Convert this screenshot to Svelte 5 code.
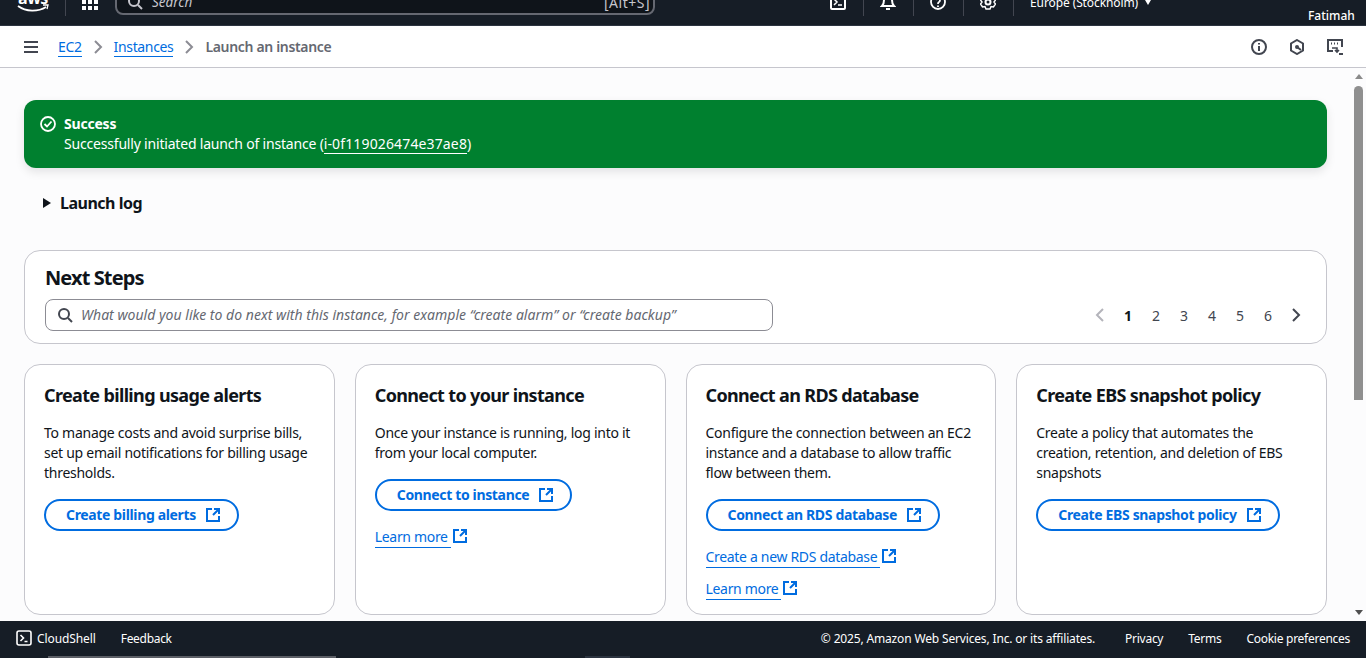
<script>
  const pages = [1, 2, 3, 4, 5, 6];
  const cards = [
    {
      title: 'Create billing usage alerts',
      body: 'To manage costs and avoid surprise bills, set up email notifications for billing usage thresholds.',
      action: 'Create billing alerts',
      links: []
    },
    {
      title: 'Connect to your instance',
      body: 'Once your instance is running, log into it from your local computer.',
      action: 'Connect to instance',
      links: ['Learn more']
    },
    {
      title: 'Connect an RDS database',
      body: 'Configure the connection between an EC2 instance and a database to allow traffic flow between them.',
      action: 'Connect an RDS database',
      links: ['Create a new RDS database', 'Learn more']
    },
    {
      title: 'Create EBS snapshot policy',
      body: 'Create a policy that automates the creation, retention, and deletion of EBS snapshots',
      action: 'Create EBS snapshot policy',
      links: []
    }
  ];
</script>

{#snippet external()}
  <svg class="ext" viewBox="0 0 16 16" width="16" height="16" fill="none" stroke="currentColor" stroke-width="2">
    <path d="M7 2H2v12h12V9" />
    <path d="M9 2h5v5M14 2L8 8" />
  </svg>
{/snippet}

<div class="page">
  <header class="topbar">
    <div class="top-row">
      <div class="aws">
        <span class="aws-word">aws</span>
        <svg viewBox="0 0 34 10" width="34" height="10" fill="none" stroke="#fff">
          <path d="M2 2c8 6 20 6 28 1" stroke-width="1.8" />
          <path d="M27 1l5 0-1 4" stroke-width="1.3" />
        </svg>
      </div>
      <span class="sep first"></span>
      <svg class="apps" viewBox="0 0 16 16" width="16" height="16" fill="#fff">
        <rect x="0" y="0" width="4" height="4" /><rect x="6" y="0" width="4" height="4" /><rect x="12" y="0" width="4" height="4" />
        <rect x="0" y="6" width="4" height="4" /><rect x="6" y="6" width="4" height="4" /><rect x="12" y="6" width="4" height="4" />
        <rect x="0" y="12" width="4" height="4" /><rect x="6" y="12" width="4" height="4" /><rect x="12" y="12" width="4" height="4" />
      </svg>
      <div class="global-search">
        <svg viewBox="0 0 16 16" width="16" height="16" fill="none" stroke="#c6c6cd" stroke-width="2">
          <circle cx="7" cy="7" r="5" /><path d="M11 11l4 4" />
        </svg>
        <span class="gs-text">Search</span>
        <span class="gs-key">[Alt+S]</span>
      </div>
      <div class="top-right">
        <svg viewBox="0 0 16 16" width="16" height="16" fill="none" stroke="#fff" stroke-width="2"><rect x="1" y="1" width="14" height="14" rx="1" /><path d="M4 5l3 3-3 3M8 11h4" stroke-width="1.5" /></svg>
        <span class="sep"></span>
        <svg viewBox="0 0 16 16" width="16" height="16" fill="none" stroke="#fff" stroke-width="2"><path d="M2 12c2-2 2-3 2-6a4 4 0 018 0c0 3 0 4 2 6zM6 15h4" /></svg>
        <span class="sep"></span>
        <svg viewBox="0 0 16 16" width="16" height="16" fill="none" stroke="#fff" stroke-width="1.8"><circle cx="8" cy="8" r="7" /><path d="M6 6a2 2 0 113 2c-1 .5-1 1-1 2M8 11.5v1.5" /></svg>
        <span class="sep"></span>
        <svg viewBox="0 0 16 16" width="16" height="16" fill="none" stroke="#fff" stroke-width="2"><circle cx="8" cy="8" r="2.5" /><path d="M6 1h4l1 2.500 2.500-.5 2 3L14 8l1.500 2-2 3-2.500-.5-1 2.500H6l-1-2.500-2.500.5-2-3L2 8 .5 6l2-3 2.500.5z" stroke-width="1.500" /></svg>
        <span class="sep"></span>
        <span class="region">Europe (Stockholm)</span>
        <span class="caret"></span>
        <span class="user">Fatimah</span>
      </div>
    </div>
  </header>

  <nav class="crumbs">
    <svg class="menu" viewBox="0 0 16 16" width="16" height="16" fill="none" stroke="#424650" stroke-width="2">
      <path d="M1 3h14M1 8h14M1 13h14" />
    </svg>
    <span class="crumb">EC2</span>
    <svg class="chev" viewBox="0 0 16 16" width="16" height="16" fill="none" stroke="#8c8c94" stroke-width="2"><path d="M5 2l6 6-6 6" /></svg>
    <span class="crumb">Instances</span>
    <svg class="chev" viewBox="0 0 16 16" width="16" height="16" fill="none" stroke="#8c8c94" stroke-width="2"><path d="M5 2l6 6-6 6" /></svg>
    <span class="crumb-current">Launch an instance</span>
    <div class="tools">
      <svg viewBox="0 0 16 16" width="16" height="16" fill="none" stroke="#424650" stroke-width="2"><circle cx="8" cy="8" r="7" /><path d="M8 7v5M8 4v1.500" /></svg>
      <svg viewBox="0 0 16 16" width="16" height="16" fill="none" stroke="#424650" stroke-width="2"><path d="M8 1l6 3.500v7L8 15l-6-3.500v-7z" /><circle cx="8" cy="8" r="2" fill="#424650" stroke="none" /><path d="M8 8l4 3" /></svg>
      <svg viewBox="0 0 16 16" width="16" height="16" fill="none" stroke="#424650" stroke-width="2"><path d="M6 12H1V1h14v7" /><path d="M4 4.500h1M7 4.500h1M10 4.500h1" stroke-width="2" /><path d="M5 9h5v4M8 11l2 2 2-2" stroke-width="1.600" /><path d="M12 15h4" /></svg>
    </div>
  </nav>

  <main class="content">
    <div class="flash">
      <svg class="flash-icon" viewBox="0 0 16 16" width="16" height="16" fill="none" stroke="#fff" stroke-width="1.800">
        <circle cx="8" cy="8" r="7" /><path d="M4.500 8l2.500 2.500 4.500-5" />
      </svg>
      <div>
        <div class="flash-title">Success</div>
        <div class="flash-text">Successfully initiated launch of instance (<span class="flash-link">i-0f119026474e37ae8</span>)</div>
      </div>
    </div>

    <div class="log">
      <span class="tri"></span>
      <span>Launch log</span>
    </div>

    <section class="next">
      <h2>Next Steps</h2>
      <div class="next-row">
        <div class="search">
          <svg viewBox="0 0 16 16" width="16" height="16" fill="none" stroke="#424650" stroke-width="2">
            <circle cx="7" cy="7" r="5" /><path d="M11 11l4 4" />
          </svg>
          <span>What would you like to do next with this instance, for example “create alarm” or “create backup”</span>
        </div>
        <div class="pager">
          <svg viewBox="0 0 16 16" width="16" height="16" fill="none" stroke="#b4b4bb" stroke-width="2"><path d="M11 2L5 8l6 6" /></svg>
          {#each pages as p}
            <span class="pg" class:on={p === 1}>{p}</span>
          {/each}
          <svg viewBox="0 0 16 16" width="16" height="16" fill="none" stroke="#424650" stroke-width="2"><path d="M5 2l6 6-6 6" /></svg>
        </div>
      </div>
    </section>

    <div class="cards">
      {#each cards as card}
        <article class="card">
          <h3>{card.title}</h3>
          <p>{card.body}</p>
          <div class="action-wrap">
            <span class="action">{card.action}{@render external()}</span>
          </div>
          {#each card.links as link}
            <div class="link-row"><span class="link">{link}</span>{@render external()}</div>
          {/each}
        </article>
      {/each}
    </div>

    <div class="scrollbar">
      <span class="sb-up"></span>
      <span class="sb-thumb"></span>
      <span class="sb-down"></span>
    </div>
  </main>

  <footer class="footer">
    <div class="foot-row">
      <svg viewBox="0 0 16 16" width="16" height="16" fill="none" stroke="#fff" stroke-width="1.600">
        <rect x="1" y="1" width="14" height="14" rx="2" /><path d="M4.500 5l3 3-3 3M8.500 11.500h3" />
      </svg>
      <span class="cs">CloudShell</span>
      <span class="fb">Feedback</span>
      <span class="copy">© 2025, Amazon Web Services, Inc. or its affiliates.</span>
      <span class="fl">Privacy</span>
      <span class="fl">Terms</span>
      <span class="fl">Cookie preferences</span>
    </div>
    <div class="strip"><span class="s1"></span><span class="s2"></span></div>
  </footer>
</div>

<style>
  :global(body) {
    margin: 0;
    font-family: "Noto Sans", "Open Sans", sans-serif;
    color: #0f141a;
    overflow: hidden;
  }
  .page {
    width: 1366px;
    height: 658px;
    display: flex;
    flex-direction: column;
    overflow: hidden;
  }

  /* top nav, clipped since the page is scrolled a bit */
  .topbar {
    height: 26px;
    flex: none;
    box-sizing: border-box;
    background: #161d26;
    border-bottom: 1px solid #2c3440;
    overflow: hidden;
    display: flex;
    align-items: flex-end;
  }
  .top-row {
    height: 40px;
    width: 100%;
    flex: none;
    margin-bottom: 8px;
    display: flex;
    align-items: center;
    color: #fff;
    font-size: 12px;
    position: relative;
    top: 5px;
  }
  .aws {
    margin-left: 16px;
    width: 34px;
    display: flex;
    flex-direction: column;
    align-items: center;
    margin-top: 2px;
  }
  .aws-word {
    font-size: 16px;
    font-weight: 700;
    line-height: 12px;
    letter-spacing: -0.5px;
  }
  .sep {
    display: block;
    width: 1px;
    height: 28px;
    background: #424650;
    margin: 0 16.5px;
  }
  .sep.first { margin: 0 16px 0 15px; }
  .global-search {
    margin-left: 17px;
    width: 540px;
    height: 26px;
    box-sizing: border-box;
    border: 2px solid #656871;
    border-radius: 8px;
    background: #0f141a;
    display: flex;
    align-items: center;
    gap: 9px;
    padding: 0 0 0 10px;
    color: #c6c6cd;
    font-size: 13.5px;
  }
  .gs-text { font-style: italic; }
  .gs-key { margin-left: auto; margin-right: 3px; font-size: 14px; letter-spacing: 0.5px; }
  .top-right {
    position: absolute;
    left: 830px;
    top: 0;
    height: 40px;
    display: flex;
    align-items: center;
  }
  .region { margin-left: 0; font-size: 12px; letter-spacing: -0.1px; white-space: nowrap; }
  .caret {
    width: 0;
    height: 0;
    margin-left: 7px;
    border-left: 3.500px solid transparent;
    border-right: 3.500px solid transparent;
    border-top: 5px solid #fff;
  }
  .user {
    position: absolute;
    left: 478px;
    top: 26px;
    font-size: 12px;
    font-weight: 500;
    line-height: 16px;
    white-space: nowrap;
  }

  .crumbs {
    height: 42px;
    flex: none;
    box-sizing: border-box;
    background: #fff;
    border-bottom: 1px solid #c6c6cd;
    display: flex;
    align-items: center;
    padding: 0 23px 0 23px;
    font-size: 14px;
  }
  .menu { margin-right: 19px; }
  .crumb {
    color: #006ce0;
    border-bottom: 1px solid #006ce0;
    line-height: 18px;
    margin-top: 1px;
    letter-spacing: -0.35px;
  }
  .chev { margin: 0 8px; }
  .crumb-current { color: #656871; font-weight: 600; letter-spacing: -0.33px; }
  .tools { margin-left: auto; display: flex; gap: 22px; }

  .content {
    flex: 1;
    min-height: 0;
    background: #fcfcfd;
    padding: 32px 39px 0 24px;
    position: relative;
    overflow: hidden;
  }
  .flash {
    height: 68px;
    box-sizing: border-box;
    background: #00802f;
    border-radius: 12px;
    box-shadow: 0 4px 10px rgba(0, 7, 22, 0.1);
    color: #fff;
    display: flex;
    gap: 8px;
    padding: 14px 16px;
    font-size: 14px;
    line-height: 20px;
  }
  .flash-icon { margin-top: 2px; }
  .flash-title { font-weight: 700; letter-spacing: -0.2px; }
  .flash-text { letter-spacing: -0.19px; }
  .flash-link { border-bottom: 1px solid #fff; letter-spacing: 0.14px; }

  .log {
    display: flex;
    align-items: center;
    gap: 9px;
    margin: 25px 0 0 19px;
    font-size: 16px;
    font-weight: 700;
    line-height: 20px;
    letter-spacing: -0.5px;
  }
  .tri {
    width: 0;
    height: 0;
    border-top: 5px solid transparent;
    border-bottom: 5px solid transparent;
    border-left: 8px solid #0f141a;
  }

  .next {
    margin-top: 37px;
    height: 94px;
    box-sizing: border-box;
    background: #fff;
    border: 1px solid #c6c6cd;
    border-radius: 16px;
    padding: 14px 20px 0;
  }
  h2 {
    margin: 0;
    font-size: 20px;
    line-height: 26px;
    font-weight: 700;
    letter-spacing: -0.9px;
  }
  .next-row {
    margin-top: 8px;
    display: flex;
    align-items: center;
    justify-content: space-between;
  }
  .search {
    width: 728px;
    height: 32px;
    box-sizing: border-box;
    border: 1px solid #8c8c94;
    border-radius: 8px;
    display: flex;
    align-items: center;
    gap: 8px;
    padding: 0 12px 2px;
    font-size: 14px;
    font-style: italic;
    color: #656871;
    white-space: nowrap;
    letter-spacing: 0.02px;
  }
  .search svg { margin-top: 2px; margin-left: -1px; }
  .pager {
    display: flex;
    align-items: center;
    margin-right: 2px;
    font-size: 14px;
    color: #424650;
  }
  .pg { width: 28px; text-align: center; }
  .pg:first-of-type { margin-left: 6px; }
  .pg:last-of-type { margin-right: 6px; }
  .pg.on { color: #0f141a; font-weight: 700; }

  .cards {
    margin-top: 20px;
    display: grid;
    grid-template-columns: repeat(4, 1fr);
    gap: 20px;
  }
  .card {
    height: 251px;
    box-sizing: border-box;
    background: #fff;
    border: 1px solid #c6c6cd;
    border-radius: 16px;
    padding: 19px 19px 0;
    font-size: 14px;
    line-height: 20px;
  }
  h3 {
    margin: 0;
    font-size: 18px;
    line-height: 22px;
    font-weight: 700;
    letter-spacing: -0.65px;
  }
  p { margin: 17px 0 0; letter-spacing: -0.27px; }
  .action-wrap { margin-top: 16px; display: flex; }
  .action {
    height: 32px;
    box-sizing: border-box;
    border: 2px solid #006ce0;
    border-radius: 20px;
    padding: 0 16px 0 20px;
    color: #006ce0;
    font-weight: 700;
    display: flex;
    align-items: center;
    gap: 9px;
    white-space: nowrap;
    letter-spacing: -0.35px;
  }
  .ext { flex: none; }
  .link-row {
    margin-top: 11px;
    color: #006ce0;
    display: flex;
    align-items: flex-start;
    gap: 1px;
    letter-spacing: -0.32px;
  }
  .action-wrap + .link-row { margin-top: 16px; }
  .link { border-bottom: 1px solid #006ce0; padding-right: 3px; }
  .link-row .ext { margin-top: 1px; }

  .scrollbar {
    position: absolute;
    right: 0;
    top: 0;
    bottom: 0;
    width: 15px;
    background: #fcfcfd;
    display: flex;
    flex-direction: column;
    align-items: center;
  }
  .sb-up, .sb-down {
    width: 0;
    height: 0;
    border-left: 4px solid transparent;
    border-right: 4px solid transparent;
  }
  .sb-up { margin-top: 6px; border-bottom: 5px solid #8a8a8a; }
  .sb-down { margin-top: auto; margin-bottom: 6px; border-top: 5px solid #505050; }
  .sb-thumb {
    margin-top: 7px;
    width: 9px;
    height: 314px;
    background: #8f8f8f;
    border-radius: 5px 5px 0 0;
  }

  .footer {
    height: 37px;
    flex: none;
    background: #161d26;
    color: #fff;
    font-size: 12px;
  }
  .foot-row {
    height: 34px;
    display: flex;
    align-items: center;
    padding: 0 16px;
  }
  .cs { margin-left: 5px; letter-spacing: -0.1px; }
  .fb { margin-left: 25px; letter-spacing: -0.3px; }
  .copy { margin-left: auto; margin-right: 5px; letter-spacing: -0.16px; }
  .fl { margin-left: 25px; letter-spacing: -0.27px; }
  .strip { height: 3px; position: relative; }
  .s1, .s2 { position: absolute; top: 1px; height: 2px; background: #5c5f66; }
  .s1 { left: 48px; width: 288px; }
  .s2 { left: 585px; width: 45px; background: #2c3440; }
</style>
